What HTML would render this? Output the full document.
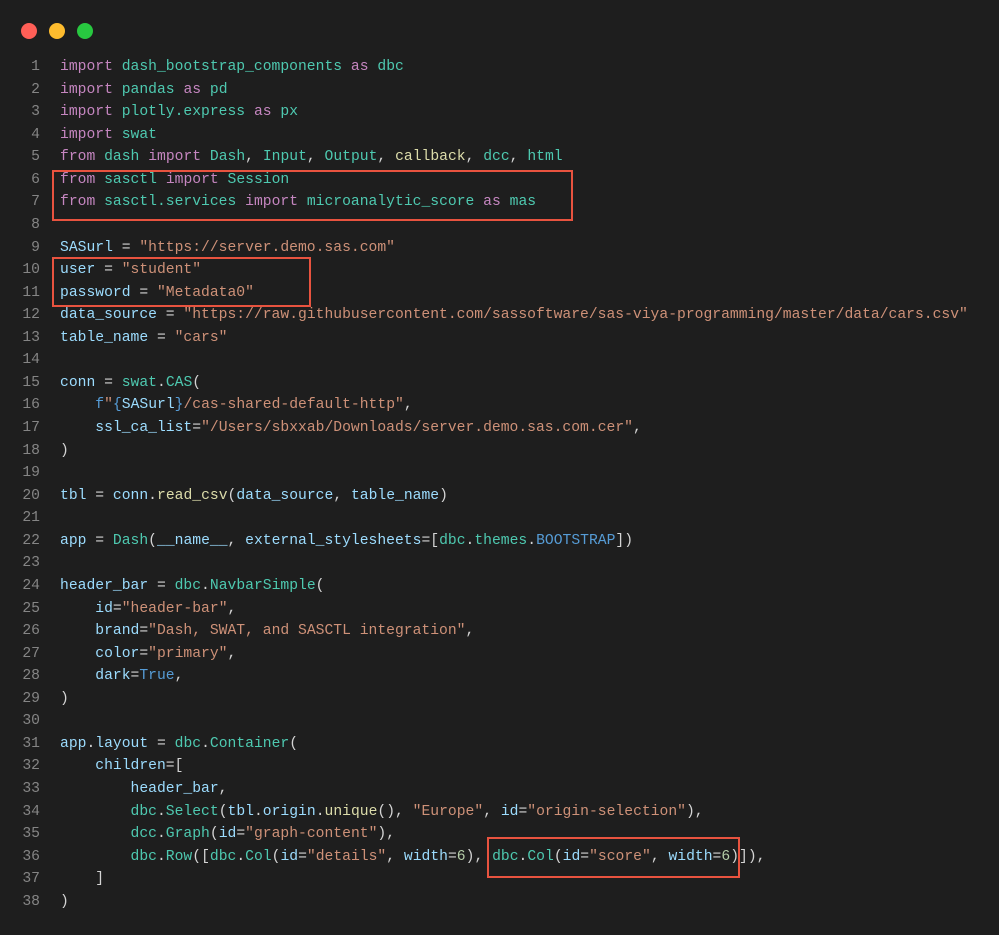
<!DOCTYPE html>
<html><head><meta charset="utf-8"><style>
html,body{margin:0;padding:0;background:#1e1e1e;}
body{width:999px;height:935px;position:relative;overflow:hidden;}
.dot{position:absolute;top:23px;width:16px;height:16px;border-radius:50%;}
.code{position:absolute;left:0;top:56px;font-family:"Liberation Mono",monospace;font-size:14.7px;line-height:22.57px;color:#d4d4d4;white-space:pre;}
.ln{display:inline-block;width:40px;text-align:right;color:#858585;margin-right:20px;}
.k{color:#c586c0}.m{color:#4ec9b0}.s{color:#ce9178}.v{color:#9cdcfe}.f{color:#dcdcaa}.n{color:#b5cea8}.b{color:#569cd6}
.box{position:absolute;border:2px solid #e8533f;box-sizing:border-box;}
</style></head><body>
<div class="dot" style="left:21px;background:#ff5f57"></div>
<div class="dot" style="left:49px;background:#febc2e"></div>
<div class="dot" style="left:77px;background:#28c840"></div>
<div class="code"><div><span class="ln">1</span><span class="k">import</span> <span class="m">dash_bootstrap_components</span> <span class="k">as</span> <span class="m">dbc</span></div><div><span class="ln">2</span><span class="k">import</span> <span class="m">pandas</span> <span class="k">as</span> <span class="m">pd</span></div><div><span class="ln">3</span><span class="k">import</span> <span class="m">plotly.express</span> <span class="k">as</span> <span class="m">px</span></div><div><span class="ln">4</span><span class="k">import</span> <span class="m">swat</span></div><div><span class="ln">5</span><span class="k">from</span> <span class="m">dash</span> <span class="k">import</span> <span class="m">Dash</span>, <span class="m">Input</span>, <span class="m">Output</span>, <span class="f">callback</span>, <span class="m">dcc</span>, <span class="m">html</span></div><div><span class="ln">6</span><span class="k">from</span> <span class="m">sasctl</span> <span class="k">import</span> <span class="m">Session</span></div><div><span class="ln">7</span><span class="k">from</span> <span class="m">sasctl.services</span> <span class="k">import</span> <span class="m">microanalytic_score</span> <span class="k">as</span> <span class="m">mas</span></div><div><span class="ln">8</span></div><div><span class="ln">9</span><span class="v">SASurl</span> = <span class="s">"https://server.demo.sas.com"</span></div><div><span class="ln">10</span><span class="v">user</span> = <span class="s">"student"</span></div><div><span class="ln">11</span><span class="v">password</span> = <span class="s">"Metadata0"</span></div><div><span class="ln">12</span><span class="v">data_source</span> = <span class="s">"https://raw.githubusercontent.com/sassoftware/sas-viya-programming/master/data/cars.csv"</span></div><div><span class="ln">13</span><span class="v">table_name</span> = <span class="s">"cars"</span></div><div><span class="ln">14</span></div><div><span class="ln">15</span><span class="v">conn</span> = <span class="m">swat</span>.<span class="m">CAS</span>(</div><div><span class="ln">16</span>    <span class="b">f</span><span class="s">"</span><span class="b">{</span><span class="v">SASurl</span><span class="b">}</span><span class="s">/cas-shared-default-http"</span>,</div><div><span class="ln">17</span>    <span class="v">ssl_ca_list</span>=<span class="s">"/Users/sbxxab/Downloads/server.demo.sas.com.cer"</span>,</div><div><span class="ln">18</span>)</div><div><span class="ln">19</span></div><div><span class="ln">20</span><span class="v">tbl</span> = <span class="v">conn</span>.<span class="f">read_csv</span>(<span class="v">data_source</span>, <span class="v">table_name</span>)</div><div><span class="ln">21</span></div><div><span class="ln">22</span><span class="v">app</span> = <span class="m">Dash</span>(<span class="v">__name__</span>, <span class="v">external_stylesheets</span>=[<span class="m">dbc</span>.<span class="m">themes</span>.<span class="b">BOOTSTRAP</span>])</div><div><span class="ln">23</span></div><div><span class="ln">24</span><span class="v">header_bar</span> = <span class="m">dbc</span>.<span class="m">NavbarSimple</span>(</div><div><span class="ln">25</span>    <span class="v">id</span>=<span class="s">"header-bar"</span>,</div><div><span class="ln">26</span>    <span class="v">brand</span>=<span class="s">"Dash, SWAT, and SASCTL integration"</span>,</div><div><span class="ln">27</span>    <span class="v">color</span>=<span class="s">"primary"</span>,</div><div><span class="ln">28</span>    <span class="v">dark</span>=<span class="b">True</span>,</div><div><span class="ln">29</span>)</div><div><span class="ln">30</span></div><div><span class="ln">31</span><span class="v">app</span>.<span class="v">layout</span> = <span class="m">dbc</span>.<span class="m">Container</span>(</div><div><span class="ln">32</span>    <span class="v">children</span>=[</div><div><span class="ln">33</span>        <span class="v">header_bar</span>,</div><div><span class="ln">34</span>        <span class="m">dbc</span>.<span class="m">Select</span>(<span class="v">tbl</span>.<span class="v">origin</span>.<span class="f">unique</span>(), <span class="s">"Europe"</span>, <span class="v">id</span>=<span class="s">"origin-selection"</span>),</div><div><span class="ln">35</span>        <span class="m">dcc</span>.<span class="m">Graph</span>(<span class="v">id</span>=<span class="s">"graph-content"</span>),</div><div><span class="ln">36</span>        <span class="m">dbc</span>.<span class="m">Row</span>([<span class="m">dbc</span>.<span class="m">Col</span>(<span class="v">id</span>=<span class="s">"details"</span>, <span class="v">width</span>=<span class="n">6</span>), <span class="m">dbc</span>.<span class="m">Col</span>(<span class="v">id</span>=<span class="s">"score"</span>, <span class="v">width</span>=<span class="n">6</span>)]),</div><div><span class="ln">37</span>    ]</div><div><span class="ln">38</span>)</div></div>
<div class="box" style="left:52px;top:170px;width:521px;height:51px"></div>
<div class="box" style="left:52px;top:257px;width:259px;height:50px"></div>
<div class="box" style="left:487px;top:837px;width:253px;height:41px"></div>
</body></html>
